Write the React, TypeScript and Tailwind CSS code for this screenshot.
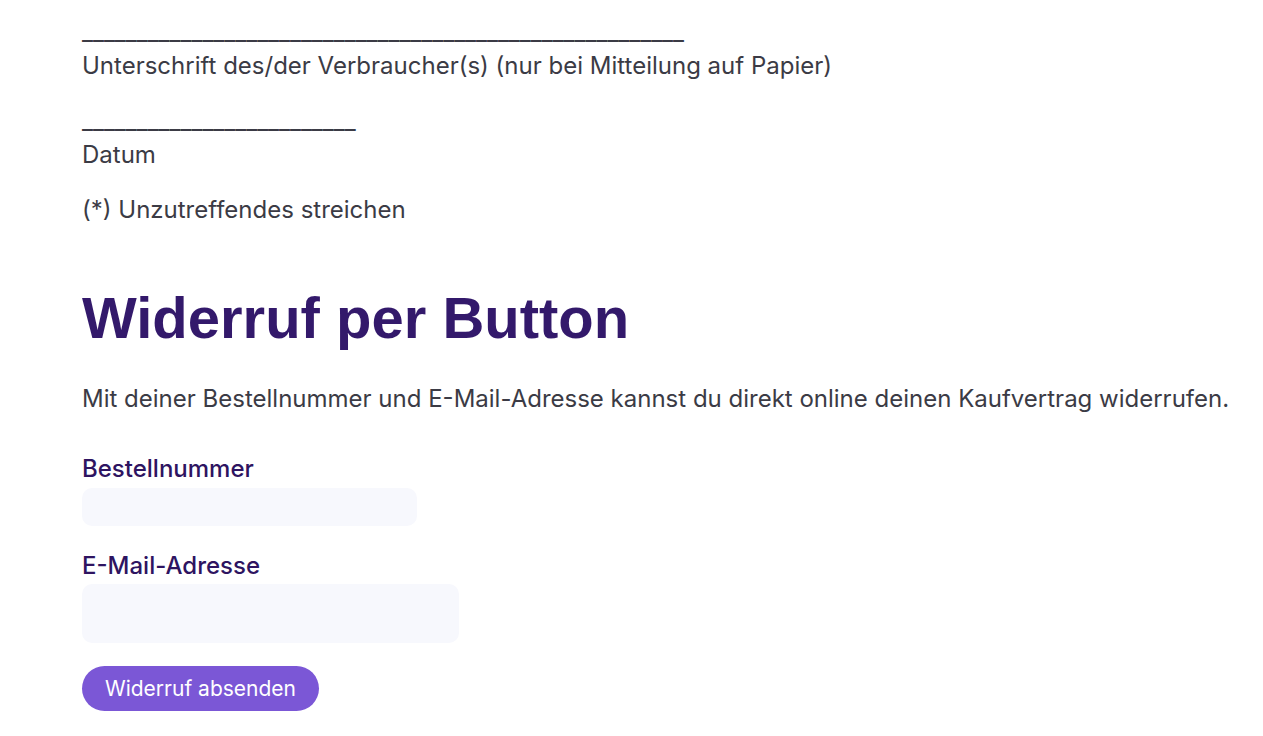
export default function App() {
  return (
    <div className="min-h-screen bg-white font-['Inter','Noto_Sans',sans-serif] text-[24px] leading-[34px] text-[#3b3b45]">
      <main className="pl-[82px] pr-[20px] pt-[15px]">
        {/* Signature lines */}
        <p className="mb-[21px]">
          _______________________________________________________
          <br />
          Unterschrift des/der Verbraucher(s) (nur bei Mitteilung auf Papier)
        </p>
        <p className="mb-[21px]">
          _________________________
          <br />
          Datum
        </p>
        <p>(*) Unzutreffendes streichen</p>

        {/* Button revocation */}
        <h2 className="mt-[56px] font-['Liberation_Sans','Arial',sans-serif] text-[58px] font-bold leading-[70px] text-[#33196b]">
          Widerruf per Button
        </h2>
        <p className="mt-[29px]">
          Mit deiner Bestellnummer und E-Mail-Adresse kannst du direkt online deinen Kaufvertrag widerrufen.
        </p>

        <form className="mt-[36px] flex flex-col items-start" onSubmit={(e) => e.preventDefault()}>
          <label className="font-medium text-[#2e1461]">Bestellnummer</label>
          <input type="text" className="mt-[2px] h-[38px] w-[335px] rounded-[10px] bg-[#f7f8fd] px-3 outline-none" />

          <label className="mt-[23px] font-medium text-[#2e1461]">E-Mail-Adresse</label>
          <input type="email" className="mt-[1px] h-[59px] w-[377px] rounded-[10px] bg-[#f7f8fd] px-3 outline-none" />

          <button type="submit" className="mt-[23px] h-[45px] w-[237px] rounded-full bg-[#7b57d6] text-[21px] leading-[45px] text-white">
            Widerruf absenden
          </button>
        </form>
      </main>
    </div>
  );
}
